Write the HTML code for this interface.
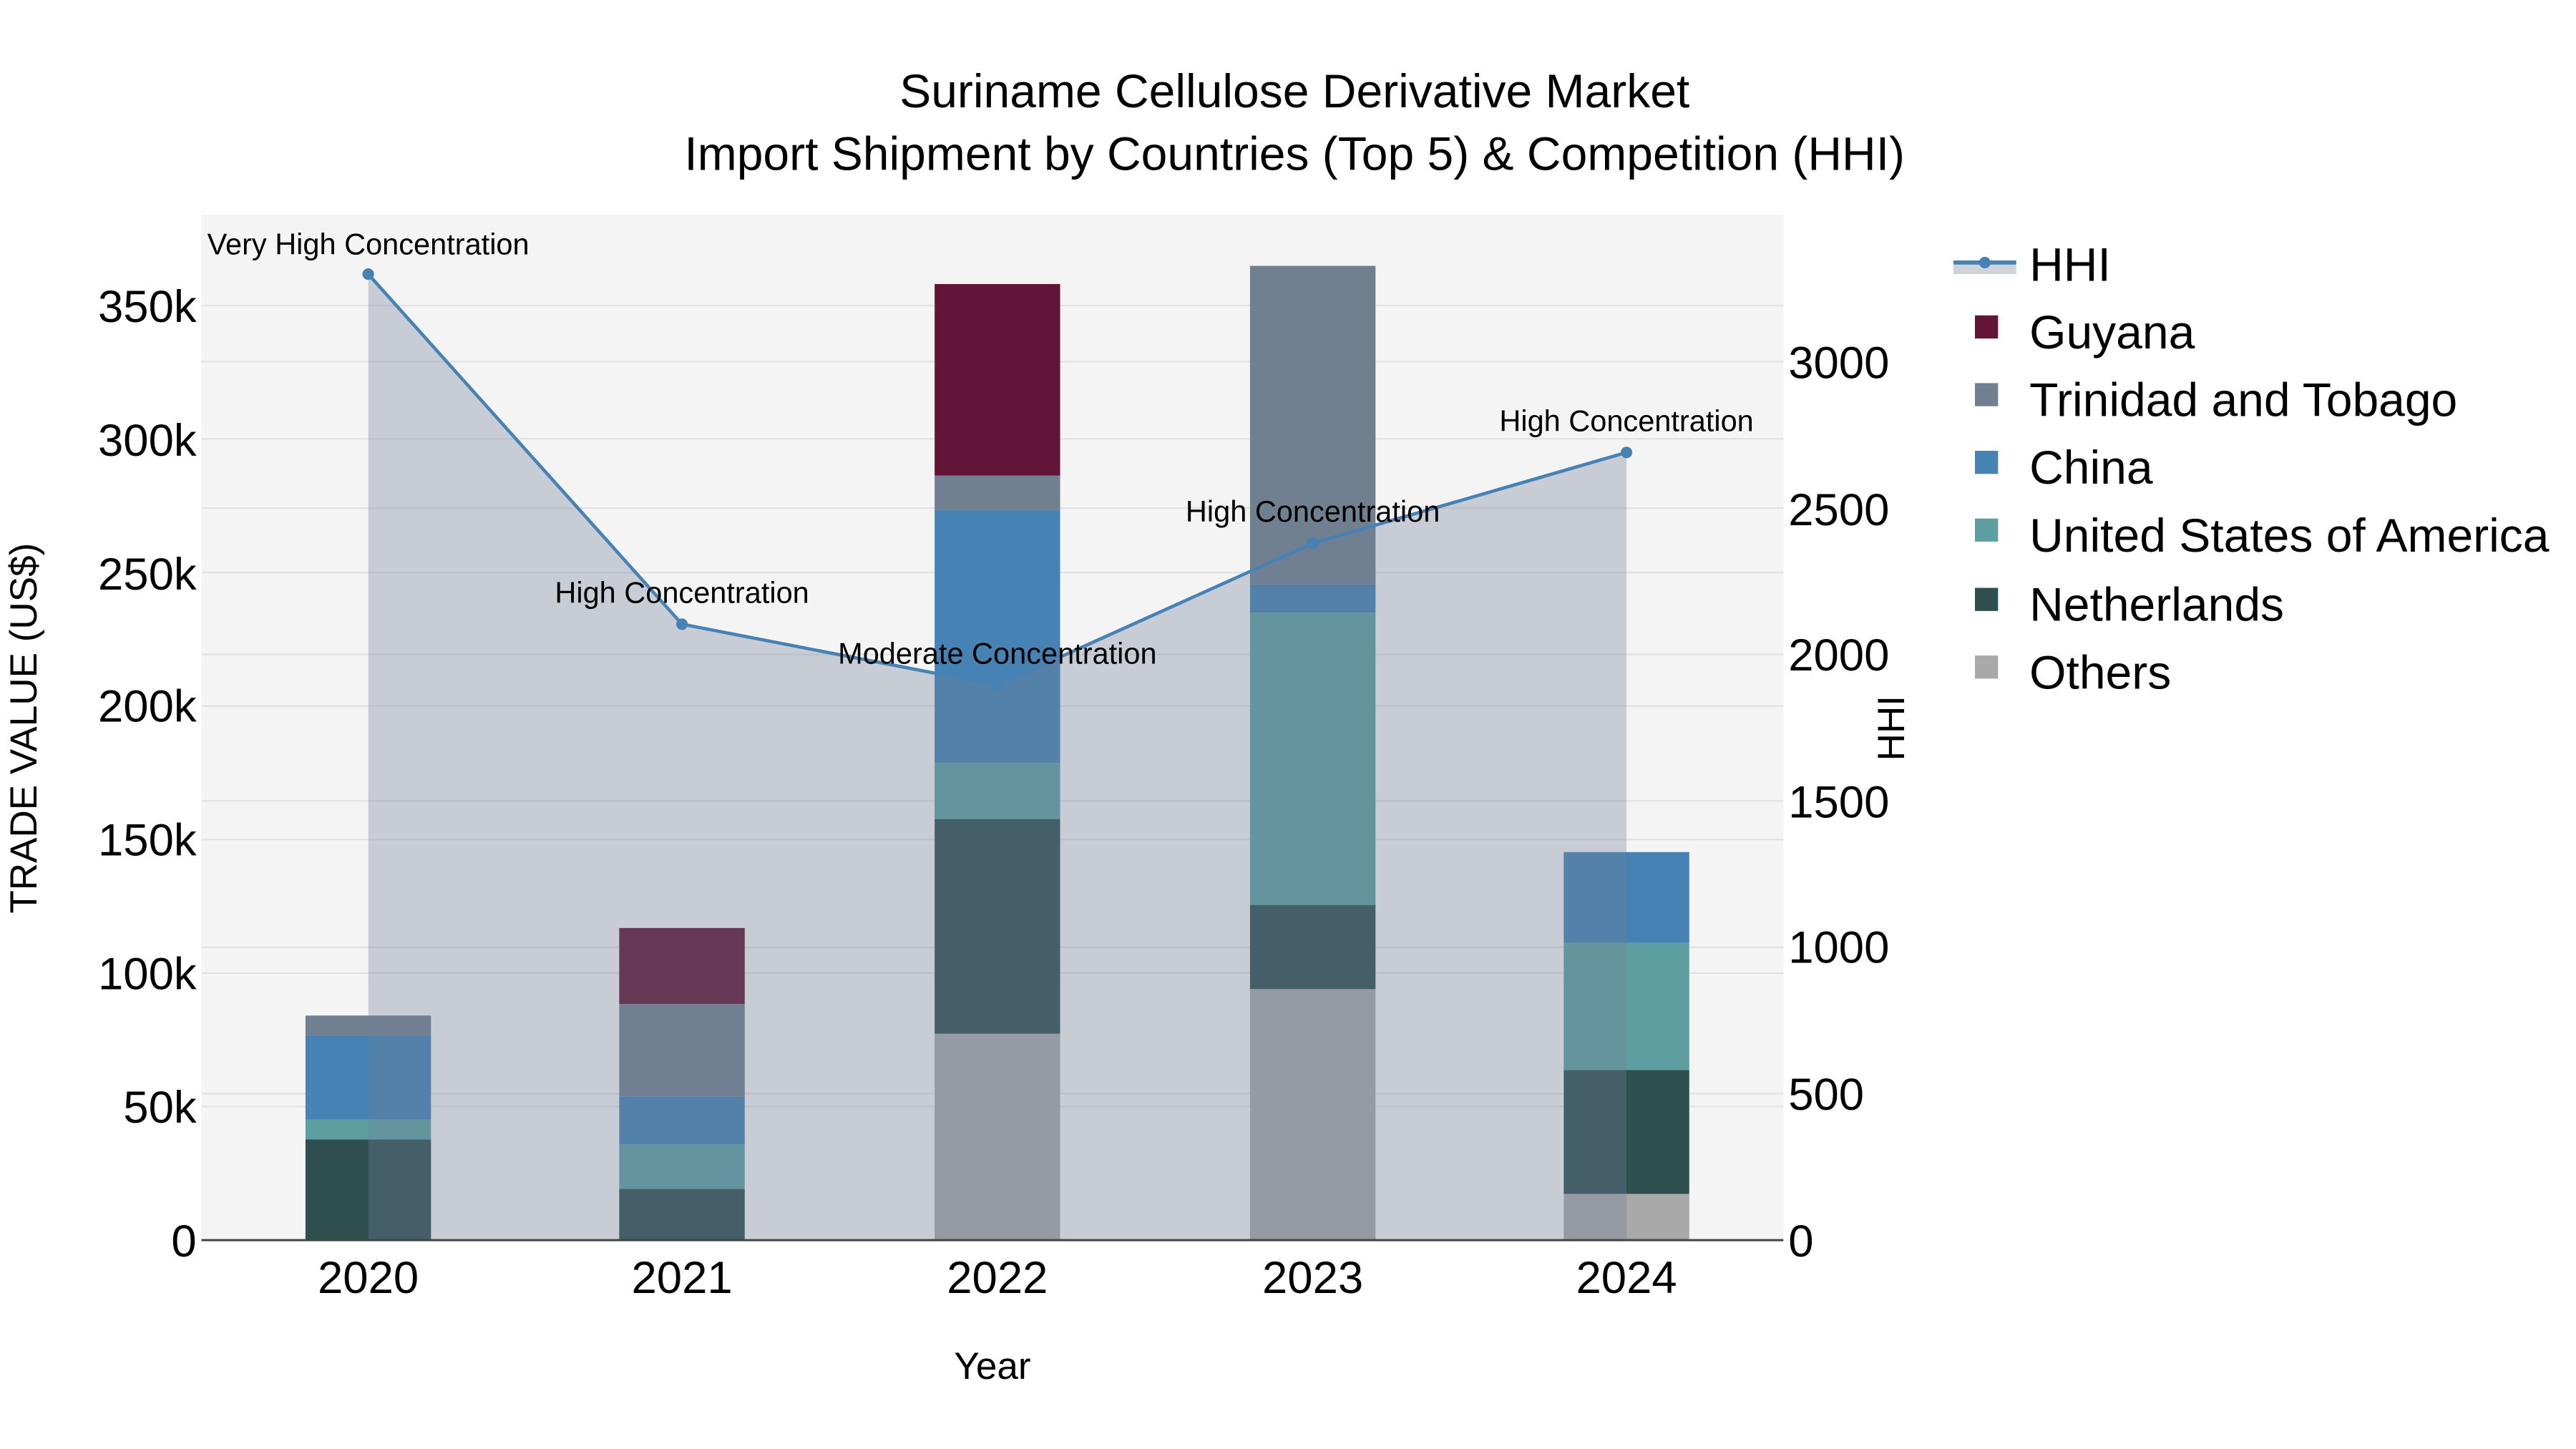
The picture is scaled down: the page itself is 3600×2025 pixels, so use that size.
<!DOCTYPE html>
<html><head><meta charset="utf-8"><style>html,body{margin:0;padding:0;background:#fff}svg{display:block}text{font-family:"Liberation Sans",sans-serif;fill:#000}</style></head>
<body>
<svg width="3600" height="2025" viewBox="0 0 1560 877.5" xmlns="http://www.w3.org/2000/svg">
<rect x="0" y="0" width="1560" height="877.5" fill="#fff"/>
<rect x="122" y="130" width="958" height="621" fill="#f4f4f4"/>
<g stroke="#e2e2e2" stroke-width="1">
<line x1="122" x2="1080" y1="670.1" y2="670.1"/><line x1="122" x2="1080" y1="589.3" y2="589.3"/><line x1="122" x2="1080" y1="508.4" y2="508.4"/><line x1="122" x2="1080" y1="427.6" y2="427.6"/><line x1="122" x2="1080" y1="346.7" y2="346.7"/><line x1="122" x2="1080" y1="265.8" y2="265.8"/><line x1="122" x2="1080" y1="185" y2="185"/>
<line x1="122" x2="1080" y1="662.3" y2="662.3"/><line x1="122" x2="1080" y1="573.7" y2="573.7"/><line x1="122" x2="1080" y1="485" y2="485"/><line x1="122" x2="1080" y1="396.3" y2="396.3"/><line x1="122" x2="1080" y1="307.7" y2="307.7"/><line x1="122" x2="1080" y1="219" y2="219"/>
</g>
<g>
<rect x="185" y="690" width="76" height="61" fill="#2f4f4f"/><rect x="185" y="678" width="76" height="12" fill="#5f9ea0"/><rect x="185" y="627" width="76" height="51" fill="#4682b4"/><rect x="185" y="615" width="76" height="12" fill="#708090"/>
<rect x="375" y="720" width="76" height="31" fill="#2f4f4f"/><rect x="375" y="693" width="76" height="27" fill="#5f9ea0"/><rect x="375" y="664" width="76" height="29" fill="#4682b4"/><rect x="375" y="608" width="76" height="56" fill="#708090"/><rect x="375" y="562" width="76" height="46" fill="#631537"/>
<rect x="566" y="626" width="76" height="125" fill="#a9a9a9"/><rect x="566" y="496" width="76" height="130" fill="#2f4f4f"/><rect x="566" y="462" width="76" height="34" fill="#5f9ea0"/><rect x="566" y="309" width="76" height="153" fill="#4682b4"/><rect x="566" y="288" width="76" height="21" fill="#708090"/><rect x="566" y="172" width="76" height="116" fill="#631537"/>
<rect x="757" y="599" width="76" height="152" fill="#a9a9a9"/><rect x="757" y="548" width="76" height="51" fill="#2f4f4f"/><rect x="757" y="371" width="76" height="177" fill="#5f9ea0"/><rect x="757" y="354" width="76" height="17" fill="#4682b4"/><rect x="757" y="161" width="76" height="193" fill="#708090"/>
<rect x="947" y="723" width="76" height="28" fill="#a9a9a9"/><rect x="947" y="648" width="76" height="75" fill="#2f4f4f"/><rect x="947" y="571" width="76" height="77" fill="#5f9ea0"/><rect x="947" y="516" width="76" height="55" fill="#4682b4"/>
</g>
<polygon points="223,751 223,166 413,378 604,415 795,329 985,274 985,751" fill="#708097" fill-opacity="0.33"/>
<polyline points="223,166 413,378 604,415 795,329 985,274" fill="none" stroke="#4682b4" stroke-width="2"/>
<g fill="#4682b4"><circle cx="223" cy="166" r="3.5"/><circle cx="413" cy="378" r="3.5"/><circle cx="604" cy="415" r="3.5"/><circle cx="795" cy="329" r="3.5"/><circle cx="985" cy="274" r="3.5"/></g>
<line x1="122" x2="1080" y1="751" y2="751" stroke="#444" stroke-width="1.3"/>
<g font-size="18" text-anchor="middle">
<text x="223" y="154">Very High Concentration</text>
<text x="413" y="365">High Concentration</text>
<text x="604" y="402">Moderate Concentration</text>
<text x="795" y="316">High Concentration</text>
<text x="985" y="261">High Concentration</text>
</g>
<g font-size="27.5" text-anchor="end">
<text x="119" y="761">0</text><text x="119" y="680">50k</text><text x="119" y="599">100k</text><text x="119" y="518">150k</text><text x="119" y="437">200k</text><text x="119" y="357">250k</text><text x="119" y="276">300k</text><text x="119" y="195">350k</text>
</g>
<g font-size="27.5" text-anchor="start">
<text x="1083" y="761">0</text><text x="1083" y="672">500</text><text x="1083" y="583">1000</text><text x="1083" y="495">1500</text><text x="1083" y="406">2000</text><text x="1083" y="318">2500</text><text x="1083" y="229">3000</text>
</g>
<g font-size="27.5" text-anchor="middle">
<text x="223" y="783">2020</text><text x="413" y="783">2021</text><text x="604" y="783">2022</text><text x="795" y="783">2023</text><text x="985" y="783">2024</text>
</g>
<text x="601" y="835" font-size="23" text-anchor="middle">Year</text>
<text transform="translate(22,441) rotate(-90)" font-size="23" text-anchor="middle">TRADE VALUE (US$)</text>
<text transform="translate(1153,441) rotate(-90)" font-size="23" text-anchor="middle">HHI</text>
<g font-size="28.6" text-anchor="middle">
<text x="784" y="65">Suriname Cellulose Derivative Market</text>
<text x="784" y="103">Import Shipment by Countries (Top 5) &amp; Competition (HHI)</text>
</g>
<rect x="1183" y="158" width="38" height="8" fill="#cfd4db"/>
<line x1="1183" x2="1221" y1="159" y2="159" stroke="#4682b4" stroke-width="2.5"/>
<circle cx="1202" cy="159" r="3.5" fill="#4682b4"/>
<rect x="1196" y="191" width="14" height="14" fill="#631537"/>
<rect x="1196" y="232" width="14" height="14" fill="#708090"/>
<rect x="1196" y="273" width="14" height="14" fill="#4682b4"/>
<rect x="1196" y="314" width="14" height="14" fill="#5f9ea0"/>
<rect x="1196" y="356" width="14" height="14" fill="#2f4f4f"/>
<rect x="1196" y="397" width="14" height="14" fill="#a9a9a9"/>
<g font-size="28.6">
<text x="1229" y="170">HHI</text>
<text x="1229" y="211">Guyana</text>
<text x="1229" y="252">Trinidad and Tobago</text>
<text x="1229" y="293">China</text>
<text x="1229" y="334">United States of America</text>
<text x="1229" y="376">Netherlands</text>
<text x="1229" y="417">Others</text>
</g>
</svg>
</body></html>
